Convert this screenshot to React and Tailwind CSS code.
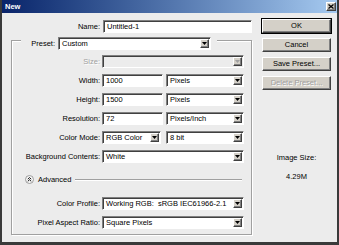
const sunken =
  'border border-t-[#808080] border-l-[#808080] border-r-white border-b-white shadow-[inset_1px_1px_0_#404040]';
const raised =
  'border border-t-white border-l-white border-r-[#404040] border-b-[#404040] shadow-[inset_-1px_-1px_0_#808080]';

const Arrow = ({ disabled }) => (
  <span className={`ml-auto mr-[1px] w-[9px] h-[9px] shrink-0 bg-[#d4d0c8] flex items-center justify-center ${raised}`}>
    <svg width="5" height="3" viewBox="0 0 5 3">
      <path d="M0 0h5L2.5 3z" fill={disabled ? '#a0a0a0' : '#000'} />
    </svg>
  </span>
);

const Input = ({ value, w }) => (
  <div className={`h-[13px] bg-white flex items-center pl-[3px] ${sunken}`} style={{ width: w }}>
    {value}
  </div>
);

const Select = ({ value, w, disabled }) => (
  <div
    className={`h-[13px] flex items-center pl-[3px] ${sunken} ${disabled ? 'bg-[#ececec]' : 'bg-white'}`}
    style={{ width: w }}
  >
    <span className="whitespace-nowrap">{value}</span>
    <Arrow disabled={disabled} />
  </div>
);

const Row = ({ label, disabled, children }) => (
  <div className="flex items-center h-[13px]">
    <span className={`w-[88px] text-right whitespace-nowrap ${disabled ? 'text-[#a0a0a0] [text-shadow:1px_1px_0_#fff]' : ''}`}>
      {label}
    </span>
    <div className="ml-[2px] flex gap-[3px]">{children}</div>
  </div>
);

const Button = ({ children, primary, disabled }) => (
  <div
    className={`h-[14px] flex items-center justify-center bg-[#d4d0c8] ${
      primary ? 'outline outline-1 outline-black' : ''
    } ${raised} ${disabled ? 'text-[#a0a0a0] [text-shadow:1px_1px_0_#fff]' : ''}`}
  >
    {children}
  </div>
);

export default function App() {
  return (
    <div className="w-[339px] h-[245px] flex flex-col bg-[#ececec] border-l-2 border-r-2 border-b-[3px] border-[#3a3a3a] font-['Liberation_Sans',Arial,sans-serif] text-[7.5px] text-black leading-none overflow-hidden">
      {/* Title bar */}
      <div className="h-[13px] shrink-0 flex items-center bg-gradient-to-r from-[#0a246a] to-[#a6caf0] pl-[3px] pr-[1px]">
        <span className="text-white font-bold">New</span>
        <div className={`ml-auto w-[10px] h-[9px] bg-[#d4d0c8] flex items-center justify-center ${raised}`}>
          <svg width="6" height="5" viewBox="0 0 6 5">
            <path d="M0.5 0.5L5.5 4.5M5.5 0.5L0.5 4.5" stroke="#000" strokeWidth="1.3" />
          </svg>
        </div>
      </div>

      <div className="flex">
        {/* Left */}
        <div className="w-[252px] flex flex-col">
          <div className="mt-[7px] flex items-center h-[13px]">
            <span className="w-[98px] text-right">Name:</span>
            <div className="ml-[3px]">
              <Input value="Untitled-1" w={149} />
            </div>
          </div>

          {/* Group box */}
          <div className="relative mt-[7px] ml-[9px] w-[241px] h-[195px] border border-[#a0a0a0] shadow-[inset_1px_1px_0_#fff,1px_1px_0_#fff] pt-[14px] flex flex-col">
            <div className="absolute -top-[4px] left-[9px] w-[196px] h-[13px] bg-[#ececec] flex items-center">
              <span className="w-[34px] text-right">Preset:</span>
              <div className="ml-[3px]">
                <Select value="Custom" w={153} />
              </div>
            </div>

            <div className="flex flex-col gap-[6px]">
              <Row label="Size:" disabled>
                <Select value="" w={142} disabled />
              </Row>
              <Row label="Width:">
                <Input value="1000" w={61} />
                <Select value="Pixels" w={78} />
              </Row>
              <Row label="Height:">
                <Input value="1500" w={61} />
                <Select value="Pixels" w={78} />
              </Row>
              <Row label="Resolution:">
                <Input value="72" w={61} />
                <Select value="Pixels/Inch" w={78} />
              </Row>
              <Row label="Color Mode:">
                <Select value="RGB Color" w={59} />
                <div className="ml-[2px]">
                  <Select value="8 bit" w={78} />
                </div>
              </Row>
              <Row label="Background Contents:">
                <Select value="White" w={142} />
              </Row>
            </div>

            {/* Advanced */}
            <div className="mt-[11px] h-[11px] flex items-center ml-[13px] mr-[9px]">
              <svg width="9" height="9" viewBox="0 0 9 9" className="shrink-0">
                <circle cx="4.5" cy="4.5" r="4" fill="#f4f4f4" stroke="#8a8a8a" strokeWidth="0.8" />
                <path d="M2.8 4.2L4.5 2.6L6.2 4.2M2.8 6.3L4.5 4.7L6.2 6.3" fill="none" stroke="#000" strokeWidth="0.9" />
              </svg>
              <span className="ml-[4px]">Advanced</span>
              <div className="ml-[4px] flex-1 border-t border-[#a0a0a0] shadow-[0_1px_0_#fff]" />
            </div>

            <div className="mt-[12px] flex flex-col gap-[6px]">
              <Row label="Color Profile:">
                <Select value={'Working RGB:\u00a0 sRGB IEC61966-2.1'} w={142} />
              </Row>
              <Row label="Pixel Aspect Ratio:">
                <Select value="Square Pixels" w={142} />
              </Row>
            </div>
          </div>
        </div>

        {/* Right */}
        <div className="ml-[8px] w-[69px] flex flex-col">
          <div className="mt-[6px] flex flex-col gap-[5px]">
            <Button primary>OK</Button>
            <Button>Cancel</Button>
            <Button>Save Preset...</Button>
            <Button disabled>Delete Preset...</Button>
          </div>
          <div className="mt-[64px] text-center">Image Size:</div>
          <div className="mt-[11px] text-center">4.29M</div>
        </div>
      </div>
    </div>
  );
}
